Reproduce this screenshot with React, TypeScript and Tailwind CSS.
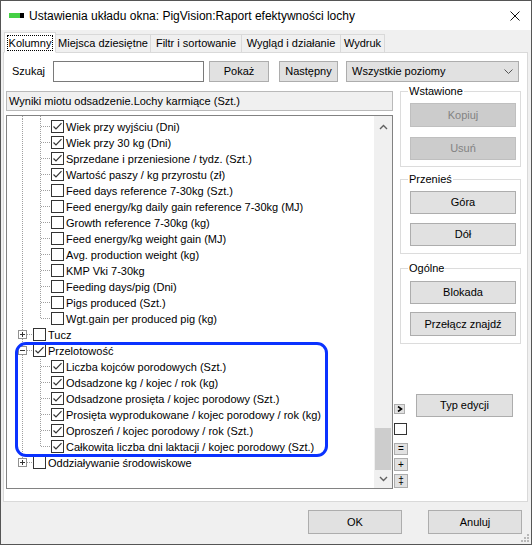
import React from "react";

type Row =
  | { kind: "leaf"; text: string; checked?: boolean; last?: boolean; outer: boolean }
  | { kind: "node"; text: string; checked?: boolean; open?: boolean; last?: boolean };

const rows: Row[] = [
  { kind: "leaf", text: "Wiek przy wyjściu (Dni)", checked: true, outer: true },
  { kind: "leaf", text: "Wiek przy 30 kg (Dni)", checked: true, outer: true },
  { kind: "leaf", text: "Sprzedane i przeniesione / tydz. (Szt.)", checked: true, outer: true },
  { kind: "leaf", text: "Wartość paszy / kg przyrostu (zł)", checked: true, outer: true },
  { kind: "leaf", text: "Feed days reference 7-30kg (Szt.)", outer: true },
  { kind: "leaf", text: "Feed energy/kg daily gain reference 7-30kg (MJ)", outer: true },
  { kind: "leaf", text: "Growth reference 7-30kg (kg)", outer: true },
  { kind: "leaf", text: "Feed energy/kg weight gain (MJ)", outer: true },
  { kind: "leaf", text: "Avg. production weight (kg)", outer: true },
  { kind: "leaf", text: "KMP Vki 7-30kg", outer: true },
  { kind: "leaf", text: "Feeding days/pig (Dni)", outer: true },
  { kind: "leaf", text: "Pigs produced (Szt.)", outer: true },
  { kind: "leaf", text: "Wgt.gain per produced pig (kg)", outer: true, last: true },
  { kind: "node", text: "Tucz" },
  { kind: "node", text: "Przelotowość", checked: true, open: true },
  { kind: "leaf", text: "Liczba kojców porodowych (Szt.)", checked: true, outer: true },
  { kind: "leaf", text: "Odsadzone kg / kojec / rok (kg)", checked: true, outer: true },
  { kind: "leaf", text: "Odsadzone prosięta / kojec porodowy (Szt.)", checked: true, outer: true },
  { kind: "leaf", text: "Prosięta wyprodukowane / kojec porodowy / rok (kg)", checked: true, outer: true },
  { kind: "leaf", text: "Oproszeń / kojec porodowy / rok (Szt.)", checked: true, outer: true },
  { kind: "leaf", text: "Całkowita liczba dni laktacji / kojec porodowy (Szt.)", checked: true, outer: true, last: true },
  { kind: "node", text: "Oddziaływanie środowiskowe", last: true },
];

const dot = { stroke: "#a0a0a0", strokeWidth: 1, strokeDasharray: "1 1" };

function Check({ checked }: { checked?: boolean }) {
  return (
    <div className="w-[13px] h-[13px] shrink-0 mt-[1px] border border-[#333] bg-white flex items-center justify-center">
      {checked && (
        <svg width="11" height="11" viewBox="0 0 11 11">
          <path d="M1.5 5.5 L4 8 L9.5 2.2" fill="none" stroke="#333" strokeWidth="1.2" />
        </svg>
      )}
    </div>
  );
}

function TreeRow({ row }: { row: Row }) {
  if (row.kind === "leaf") {
    return (
      <div className="flex items-start h-[16px]">
        <svg width="44" height="16" className="shrink-0">
          {row.outer && <line x1="15.5" y1="0" x2="15.5" y2="16" {...dot} />}
          <line x1="33.5" y1="0" x2="33.5" y2={row.last ? 7 : 16} {...dot} />
          <line x1="34" y1="7.5" x2="44" y2="7.5" {...dot} />
        </svg>
        <Check checked={row.checked} />
        <span className="ml-[2px] text-[11px] leading-[16px] whitespace-nowrap">{row.text}</span>
      </div>
    );
  }
  return (
    <div className="flex items-start h-[16px]">
      <svg width="26" height="16" className="shrink-0">
        <line x1="15.5" y1="0" x2="15.5" y2="3" {...dot} />
        {!row.last && <line x1="15.5" y1="12" x2="15.5" y2="16" {...dot} />}
        <rect x="11.5" y="3.5" width="8" height="8" fill="#fff" stroke="#919191" />
        <rect x="13" y="7" width="5" height="1" fill="#333" />
        {!row.open && <rect x="15" y="5" width="1" height="5" fill="#333" />}
        <line x1="20" y1="7.5" x2="26" y2="7.5" {...dot} />
      </svg>
      <Check checked={row.checked} />
      <span className="ml-[2px] text-[11px] leading-[16px] whitespace-nowrap">{row.text}</span>
    </div>
  );
}

function Btn({
  children,
  className = "",
  disabled,
}: {
  children: React.ReactNode;
  className?: string;
  disabled?: boolean;
}) {
  return (
    <div
      className={
        "flex items-center justify-center border text-[11px] whitespace-nowrap " +
        (disabled
          ? "bg-[#cccccc] border-[#bfbfbf] text-[#838383] "
          : "bg-[#e1e1e1] border-[#adadad] text-black ") +
        className
      }
    >
      {children}
    </div>
  );
}

export default function App() {
  return (
    <div className="relative w-[532px] h-[545px] border border-[#555] bg-[#f0f0f0] flex flex-col font-['Liberation_Sans',Arial,sans-serif] text-black">
      {/* title bar */}
      <div className="h-[29px] bg-white flex items-center pl-[8px] shrink-0">
        <div className="flex h-[5px]">
          <div className="w-[11px] bg-[#45d045]" />
          <div className="w-[4px] bg-black" />
        </div>
        <span className="ml-[5px] text-[12px]">Ustawienia układu okna: PigVision:Raport efektywności lochy</span>
        <svg width="10" height="10" viewBox="0 0 10 10" className="ml-auto mr-[11px]">
          <path d="M0.5 0.5 L9.5 9.5 M9.5 0.5 L0.5 9.5" stroke="#111" strokeWidth="1" />
        </svg>
      </div>

      <div className="px-[2px]">
        {/* tabs */}
        <div className="mt-[2px] pl-[1px] flex items-end h-[21px] relative z-10 -mb-px text-[11px] whitespace-nowrap">
          <div className="w-[52px] h-[21px] bg-white border border-[#d9d9d9] border-b-white flex items-center justify-center">
            <span className="border border-dotted border-black px-[1px] leading-[14px]">Kolumny</span>
          </div>
          <div className="w-[95px] h-[19px] bg-[#f0f0f0] border border-l-0 border-[#d9d9d9] flex items-center justify-center">Miejsca dziesiętne</div>
          <div className="w-[91px] h-[19px] bg-[#f0f0f0] border border-l-0 border-[#d9d9d9] flex items-center justify-center">Filtr i sortowanie</div>
          <div className="w-[99px] h-[19px] bg-[#f0f0f0] border border-l-0 border-[#d9d9d9] flex items-center justify-center">Wygląd i działanie</div>
          <div className="w-[44px] h-[19px] bg-[#f0f0f0] border border-l-0 border-[#d9d9d9] flex items-center justify-center">Wydruk</div>
        </div>

        {/* tab panel */}
        <div className="w-[525px] h-[450px] bg-white border border-[#d9d9d9]">
          <div className="mt-[8px] h-[21px] flex items-center pl-[8px] text-[11px]">
            <span className="w-[41px]">Szukaj</span>
            <div className="w-[151px] h-[21px] border border-[#7a7a7a] bg-white" />
            <Btn className="ml-[5px] w-[60px] h-[21px]">Pokaż</Btn>
            <Btn className="ml-[10px] w-[59px] h-[21px]">Następny</Btn>
            <div className="ml-[8px] w-[173px] h-[21px] border border-[#adadad] bg-[#e1e1e1] flex items-center pl-[5px] pr-[5px]">
              <span>Wszystkie poziomy</span>
              <svg width="9" height="5" viewBox="0 0 9 5" className="ml-auto">
                <path d="M0.5 0.5 L4.5 4.5 L8.5 0.5" fill="none" stroke="#555" strokeWidth="1" />
              </svg>
            </div>
          </div>

          <div className="mt-[2px] flex">
            {/* left column */}
            <div className="ml-[2px] w-[387px]">
              <div className="mt-[7px] h-[20px] border border-[#b9b9b9] bg-[#f0f0f0] flex items-center pl-[2px] text-[11px]">
                Wyniki miotu odsadzenie.Lochy karmiące (Szt.)
              </div>
              <div className="mt-[4px] h-[374px] border border-[#828282] bg-white flex">
                <div className="flex-1 overflow-hidden">
                  <svg width="44" height="3" className="block">
                    <line x1="15.5" y1="0" x2="15.5" y2="3" {...dot} />
                    <line x1="33.5" y1="0" x2="33.5" y2="3" {...dot} />
                  </svg>
                  {rows.map((r, i) => (
                    <TreeRow key={i} row={r} />
                  ))}
                </div>
                <div className="w-[18px] bg-[#f0f0f0] flex flex-col items-center">
                  <svg width="9" height="6" viewBox="0 0 9 6" className="mt-[8px]">
                    <path d="M1 5 L4.5 1.5 L8 5" fill="none" stroke="#606060" strokeWidth="1.4" />
                  </svg>
                  <div className="flex-1" />
                  <div className="w-[16px] h-[42px] bg-[#cdcdcd]" />
                  <svg width="9" height="6" viewBox="0 0 9 6" className="mt-[6px] mb-[6px]">
                    <path d="M1 1 L4.5 4.5 L8 1" fill="none" stroke="#606060" strokeWidth="1.4" />
                  </svg>
                </div>
              </div>
            </div>

            {/* right column */}
            <div className="ml-px flex flex-col">
              <fieldset className="ml-[6px] w-[121px] border border-[#dcdcdc] pl-[9px] pb-[6px]">
                <legend className="-ml-[2px] px-[1px] text-[11px] leading-[14px]">Wstawione</legend>
                <Btn disabled className="mt-[5px] w-[106px] h-[24px]">Kopiuj</Btn>
                <Btn disabled className="mt-[10px] w-[106px] h-[23px]">Usuń</Btn>
              </fieldset>
              <fieldset className="mt-[5px] ml-[6px] w-[121px] border border-[#dcdcdc] pl-[9px] pb-[7px]">
                <legend className="-ml-[2px] px-[1px] text-[11px] leading-[14px]">Przenieś</legend>
                <Btn className="mt-[5px] w-[106px] h-[23px]">Góra</Btn>
                <Btn className="mt-[9px] w-[106px] h-[23px]">Dół</Btn>
              </fieldset>
              <fieldset className="mt-[7px] ml-[6px] w-[121px] border border-[#dcdcdc] pl-[9px] pb-[7px]">
                <legend className="-ml-[2px] px-[1px] text-[11px] leading-[14px]">Ogólne</legend>
                <Btn className="mt-[6px] w-[106px] h-[23px]">Blokada</Btn>
                <Btn className="mt-[8px] w-[106px] h-[24px]">Przełącz znajdź</Btn>
              </fieldset>

              <div className="mt-[50px] flex items-start">
                <div className="w-[14px] flex flex-col">
                  <div className="mt-[10px] w-[11px] h-[10px] bg-[#e1e1e1] border border-[#adadad] flex items-center justify-center">
                    <svg width="6" height="6" viewBox="0 0 6 6">
                      <path d="M1 0.5 L4.5 3 L1 5.5" fill="none" stroke="#000" strokeWidth="1.6" />
                    </svg>
                  </div>
                  <div className="mt-[9px] w-[13px] h-[12px] border border-[#333] bg-white" />
                  <div className="mt-[8px] w-[14px] h-[12px] bg-[#e1e1e1] border border-[#adadad] flex items-center justify-center text-[10px] leading-none">=</div>
                  <div className="mt-[3px] w-[14px] h-[13px] bg-[#e1e1e1] border border-[#adadad] flex items-center justify-center text-[10px] leading-none">+</div>
                  <div className="mt-[3px] w-[14px] h-[14px] bg-[#e1e1e1] border border-[#adadad] flex items-center justify-center text-[10px] leading-none">‡</div>
                </div>
                <Btn className="ml-[8px] w-[97px] h-[23px]">Typ edycji</Btn>
              </div>
            </div>
          </div>
        </div>
      </div>

      {/* bottom buttons */}
      <div className="mt-[8px] flex justify-end pr-[9px] gap-[26px]">
        <Btn className="w-[94px] h-[24px]">OK</Btn>
        <Btn className="w-[94px] h-[24px]">Anuluj</Btn>
      </div>

      {/* highlight annotation */}
      <div className="absolute left-[14px] top-[341px] w-[313px] h-[115px] border-[3px] border-[#0a32ff] rounded-[11px] pointer-events-none" />

      {/* resize grip */}
      <svg width="10" height="10" viewBox="0 0 10 10" className="absolute right-[1px] bottom-[1px]">
        <rect x="7" y="1" width="2" height="2" fill="#b8b8b8" />
        <rect x="4" y="4" width="2" height="2" fill="#b8b8b8" />
        <rect x="7" y="4" width="2" height="2" fill="#b8b8b8" />
        <rect x="1" y="7" width="2" height="2" fill="#b8b8b8" />
        <rect x="4" y="7" width="2" height="2" fill="#b8b8b8" />
        <rect x="7" y="7" width="2" height="2" fill="#b8b8b8" />
      </svg>
    </div>
  );
}
